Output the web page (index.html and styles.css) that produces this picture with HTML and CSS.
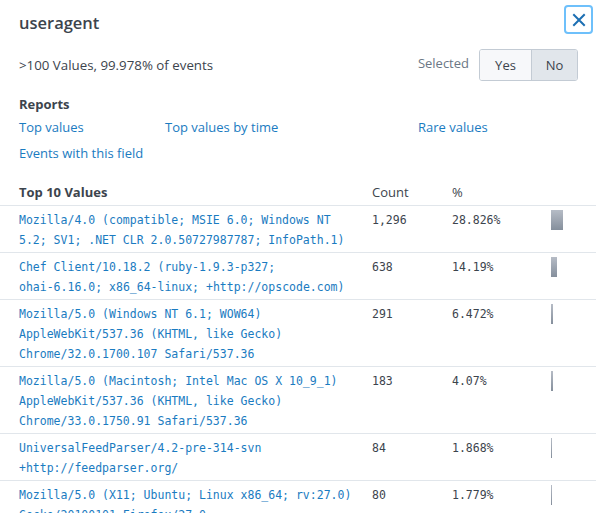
FILE: index.html
```html
<!DOCTYPE html>
<html>
<head>
<meta charset="utf-8">
<link rel="stylesheet" href="styles.css">
</head>
<body>
<div class="panel">
  <div class="head">
    <h1 class="title">useragent</h1>
    <button class="close" aria-label="Close">
      <svg width="14" height="14" viewBox="0 0 14 14"><path d="M2 2 L12 12 M12 2 L2 12" stroke="#1c6fb3" stroke-width="2" stroke-linecap="square"/></svg>
    </button>
  </div>
  <div class="stats">
    <span class="summary">&gt;100 Values, 99.978% of events</span>
    <span class="sel-label">Selected</span>
    <div class="toggle">
      <span class="opt">Yes</span>
      <span class="opt active">No</span>
    </div>
  </div>
  <div class="reports">
    <div class="section-title">Reports</div>
    <div class="links">
      <a class="link">Top values</a>
      <a class="link">Top values by time</a>
      <a class="link">Rare values</a>
      <a class="link">Events with this field</a>
    </div>
  </div>
  <table class="values">
    <colgroup><col class="c-val"><col class="c-count"><col class="c-pct"><col class="c-bar"></colgroup>
    <thead>
      <tr><th>Top 10 Values</th><th class="light">Count</th><th class="light">%</th><th></th></tr>
    </thead>
    <tbody>
      <tr><td class="val">Mozilla/4.0 (compatible; MSIE 6.0; Windows NT 5.2; SV1; .NET CLR 2.0.50727987787; InfoPath.1)</td><td class="num">1,296</td><td class="num">28.826%</td><td><div class="bar" style="width:12px"></div></td></tr>
      <tr><td class="val">Chef Client/10.18.2 (<span class="nw">ruby-1.9.3-p327;</span> <span class="nw">ohai-6.16.0;</span> <span class="nw">x86_64-linux;</span> +http://opscode.com)</td><td class="num">638</td><td class="num">14.19%</td><td><div class="bar" style="width:6px"></div></td></tr>
      <tr><td class="val">Mozilla/5.0 (Windows NT 6.1; WOW64) AppleWebKit/537.36 (KHTML, like Gecko) Chrome/32.0.1700.107 Safari/537.36</td><td class="num">291</td><td class="num">6.472%</td><td><div class="bar" style="width:2px"></div></td></tr>
      <tr><td class="val">Mozilla/5.0 (Macintosh; Intel Mac OS X 10_9_1) AppleWebKit/537.36 (KHTML, like Gecko) Chrome/33.0.1750.91 Safari/537.36</td><td class="num">183</td><td class="num">4.07%</td><td><div class="bar" style="width:2px"></div></td></tr>
      <tr><td class="val"><span class="nw">UniversalFeedParser/4.2-pre-314-svn</span> +http://feedparser.org/</td><td class="num">84</td><td class="num">1.868%</td><td><div class="bar" style="width:1px"></div></td></tr>
      <tr><td class="val">Mozilla/5.0 (X11; Ubuntu; Linux x86_64; rv:27.0) Gecko/20100101 Firefox/27.0</td><td class="num">80</td><td class="num">1.779%</td><td><div class="bar" style="width:1px"></div></td></tr>
    </tbody>
  </table>
</div>
</body>
</html>
```
FILE: styles.css
```css
* { box-sizing: border-box; }
html, body { margin: 0; padding: 0; background: #fff; }
body { font-family: "Open Sans", "Liberation Sans", sans-serif; color: #3c444d; font-size: 13px; }
.panel { width: 596px; }
.head { display: flex; justify-content: space-between; align-items: flex-start; padding: 5px 3px 0 19px; height: 40px; }
.title { margin: 6px 0 0; font-size: 16.5px; font-weight: 600; line-height: 24px; color: #3c444d; }
.close { width: 29px; height: 29px; border: 2px solid #6ec0fb; border-radius: 4px; background: #fff; display: flex; align-items: center; justify-content: center; padding: 0; }
.stats { display: flex; align-items: center; padding: 9px 18px 0 19px; height: 41px; }
.summary { flex: 1; font-size: 13.3px; }
.sel-label { color: #6b7785; margin-right: 10px; margin-top: -4px; }
.toggle { display: flex; border: 1px solid #c3cbd4; border-radius: 3px; height: 32px; overflow: hidden; }
.opt { display: flex; align-items: center; justify-content: center; background: #f7f8fa; color: #3c444d; font-size: 13px; width: 51px; }
.opt + .opt { border-left: 1px solid #c3cbd4; width: 46px; }
.opt.active { background: #e1e6eb; }
.reports { padding: 14px 19px 0; }
.section-title { font-weight: 700; font-size: 13px; line-height: 18px; }
.links { display: grid; grid-template-columns: 146px 253px auto; row-gap: 8px; margin-top: 5px; }
.link { color: #1a7bc1; font-size: 13px; line-height: 18px; }
.values { width: 596px; border-collapse: collapse; table-layout: fixed; margin-top: 21px; }
.c-val { width: 364px; }
.c-count { width: 80px; }
.c-pct { width: 99px; }
.c-bar { width: 53px; }
th { text-align: left; font-size: 13px; font-weight: 700; padding: 0 8px 4px; line-height: 18px; border-bottom: 1px solid #e1e6eb; }
th:first-child { padding-left: 19px; }
th.light { font-weight: 400; }
td { vertical-align: top; padding: 4px 8px 2px; border-bottom: 1px solid #e1e6eb; font-family: "DejaVu Sans Mono", monospace; font-size: 11.5px; line-height: 20px; }
td.val { padding-left: 19px; padding-right: 8px; color: #1a7bc1; }
td.num { color: #3c444d; }
.nw { white-space: nowrap; }
.bar { height: 20px; background: linear-gradient(#b6bcc6, #858f9c); }
```
